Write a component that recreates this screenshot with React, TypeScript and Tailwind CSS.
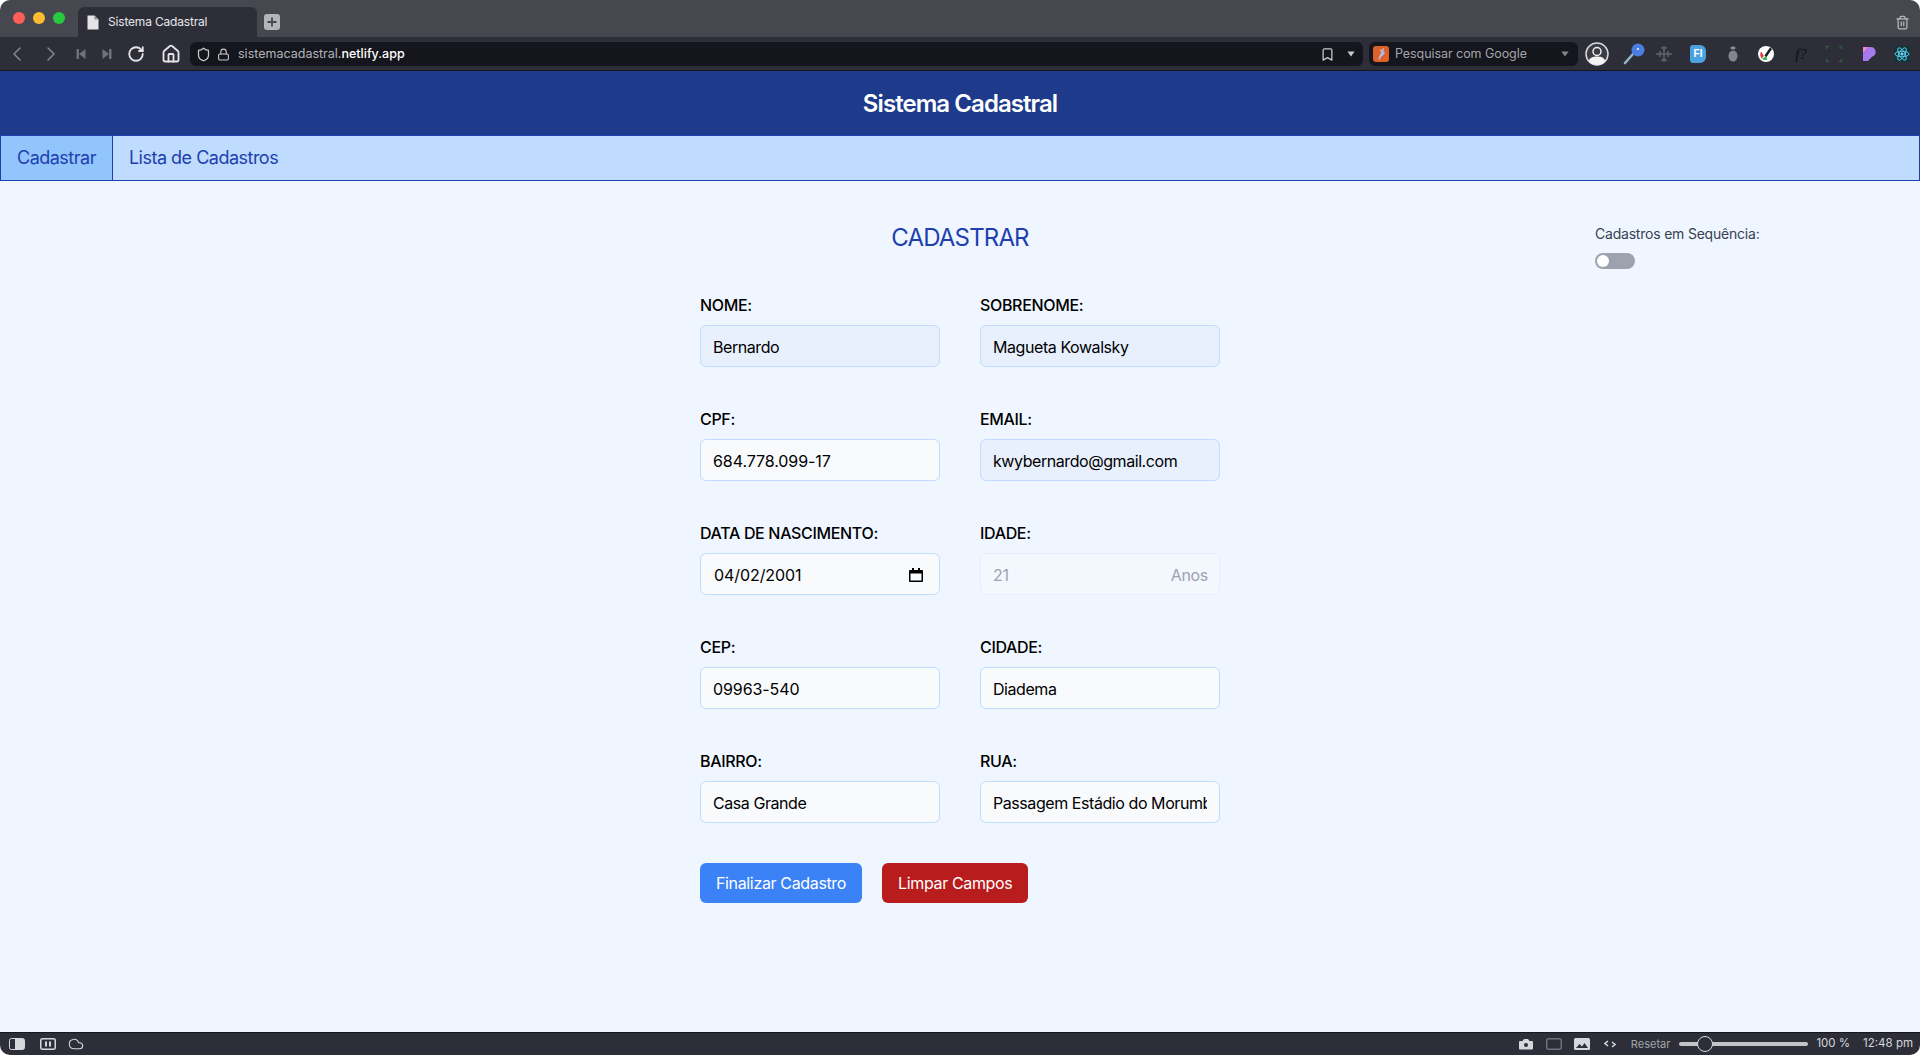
import { Bookmark, ChevronLeft, ChevronRight, Cloud, House, Lock, RotateCw, Shield, Trash2 } from "lucide-react";
import type { ReactNode } from "react";

const Slot = ({ className, children }: { className: string; children: ReactNode }) => (
  <div className={`flex shrink-0 items-center justify-center ${className}`}>{children}</div>
);

const Caret = ({ className }: { className: string }) => (
  <svg viewBox="0 0 10 7" className={className} fill="currentColor">
    <path d="M0.5 0.5h9L5 6.5z" />
  </svg>
);

const SkipIcon = ({ flip }: { flip?: boolean }) => (
  <svg viewBox="0 0 10 12" className={flip ? "h-3 w-[10px] rotate-180 text-[#6f7079]" : "h-3 w-[10px] text-[#6f7079]"} fill="currentColor">
    <rect x="0.5" y="1" width="2.5" height="10" />
    <path d="M9.5 1v10L3 6z" />
  </svg>
);

const Tabs = () => (
  <div className="flex h-[37px] items-end bg-[#46474f]">
    <div className="flex h-[37px] w-[78px] shrink-0 items-center gap-2 pb-0.5 pl-[13px]">
      <span className="h-3 w-3 rounded-full bg-[#ff5f57]" />
      <span className="h-3 w-3 rounded-full bg-[#febc2e]" />
      <span className="h-3 w-3 rounded-full bg-[#28c840]" />
    </div>
    <div className="flex h-[30px] w-[179px] items-center gap-[9px] rounded-t-md bg-[#2d2e38] pl-[9px]">
      <svg viewBox="0 0 12 15" className="h-[15px] w-3 shrink-0">
        <path d="M0.5 0.5h7L11.5 4.5v10H0.500z" fill="#e5e5e8" />
        <path d="M7.500 0.500v4h4" fill="#8b8c93" />
      </svg>
      <span className="font-['Inter'] text-xs tracking-[-0.015em] text-[#e6e6ea]">Sistema Cadastral</span>
    </div>
    <div className="mb-[7px] ml-[7px] flex h-4 w-4 items-center justify-center rounded-[3px] bg-[#b4b5ba]">
      <svg viewBox="0 0 10 10" className="h-[10px] w-[10px]">
        <path d="M5 0.500v9M0.500 5h9" stroke="#46474f" strokeWidth="1.800" />
      </svg>
    </div>
    <div className="flex-1" />
    <Trash2 className="mb-[6px] mr-[10px] h-[17px] w-[15px] text-[#b9bac0]" strokeWidth={2} />
  </div>
);

const Toolbar = () => (
  <div className="flex h-[34px] items-center border-b border-[#14151d] bg-[#2d2e38] pt-px">
    <Slot className="w-[34px]"><ChevronLeft className="h-6 w-6 text-[#85868d]" strokeWidth={1.500} /></Slot>
    <Slot className="w-[34px]"><ChevronRight className="h-6 w-6 text-[#85868d]" strokeWidth={1.500} /></Slot>
    <Slot className="w-[26px]"><SkipIcon /></Slot>
    <Slot className="w-[26px]"><SkipIcon flip /></Slot>
    <Slot className="w-[32px]"><RotateCw className="h-[18px] w-[18px] text-[#e4e4e8]" strokeWidth={2.400} /></Slot>
    <Slot className="w-[38px]"><House className="h-5 w-5 text-[#e4e4e8]" strokeWidth={2.200} /></Slot>
    <div className="flex h-6 flex-1 items-center rounded-md bg-[#14151d] pl-[6px] font-['Inter'] text-[12.500px]">
      <Shield className="h-[15px] w-[15px] text-[#c9cad0]" strokeWidth={2} />
      <Lock className="ml-[6px] h-[13px] w-[13px] text-[#c9cad0]" strokeWidth={2} />
      <span className="ml-2 text-[#b3b4ba]">sistemacadastral.</span>
      <span className="font-medium text-white">netlify.app</span>
      <div className="flex-1" />
      <Bookmark className="h-[15px] w-[15px] text-[#c9cad0]" strokeWidth={2} />
      <Caret className="ml-[12px] mr-2 h-[6px] w-2 text-[#c9cad0]" />
    </div>
    <div className="ml-[6px] flex h-6 w-[209px] shrink-0 items-center rounded-md bg-[#14151d] pl-1 font-['Inter'] text-[12.500px] tracking-[-0.005em] text-[#a3a4aa]">
      <svg viewBox="0 0 16 16" className="h-4 w-4 shrink-0">
        <rect width="16" height="16" rx="3" fill="#e0602a" />
        <path d="M10.500 2.500 6 13.500M7 4l4 3-5 5" stroke="#a9c4f0" strokeWidth="1.500" fill="none" />
      </svg>
      <span className="ml-[6px]">Pesquisar com Google</span>
      <div className="flex-1" />
      <Caret className="mr-[9px] h-[6px] w-2 text-[#85868d]" />
    </div>
    <Slot className="w-[38px]">
      <svg viewBox="0 0 24 24" className="h-6 w-6">
        <circle cx="12" cy="12" r="11" fill="#3a3b44" stroke="#d8d8dc" strokeWidth="1.500" />
        <circle cx="12" cy="9.500" r="4" fill="none" stroke="#f2f2f4" strokeWidth="1.500" />
        <path d="M3.500 19c2-4 5-4.500 8.500-4.500s6.500.5 8.500 4.500c-2 2.500-5 4-8.500 4s-6.500-1.500-8.500-4z" fill="#f2f2f4" />
      </svg>
    </Slot>
    <Slot className="w-[36px]">
      <svg viewBox="0 0 22 22" className="h-[22px] w-[22px]">
        <path d="M2 20 10 11" stroke="#8fb4c8" strokeWidth="2.600" strokeLinecap="round" />
        <circle cx="15" cy="7" r="6.500" fill="#4a7de2" />
        <circle cx="15" cy="6" r="1" fill="#ffffff" />
      </svg>
    </Slot>
    <Slot className="w-[24px]">
      <svg viewBox="0 0 18 18" className="h-[18px] w-[18px]" stroke="#62636b" strokeWidth="1.500" fill="none">
        <path d="M9 1v16M1 9h16M5 6v6M13 6v6M6 3h6M6 15h6" />
      </svg>
    </Slot>
    <Slot className="w-[44px]">
      <div className="flex h-[18px] w-4 items-center justify-center rounded-l-[3px] rounded-r-md bg-[#4aa3df] font-['Liberation_Sans',sans-serif] text-[10px] font-bold leading-none text-white">FI</div>
    </Slot>
    <Slot className="w-[26px]">
      <svg viewBox="0 0 10 16" className="h-4 w-[10px]">
        <rect x="2.500" y="0.500" width="5" height="3" rx="1.500" fill="#8a8b92" />
        <ellipse cx="5" cy="10" rx="4.500" ry="5.500" fill="#85868d" />
      </svg>
    </Slot>
    <Slot className="w-[40px]">
      <svg viewBox="0 0 16 16" className="h-4 w-4">
        <circle cx="8" cy="8" r="8" fill="#ffffff" />
        <path d="M3 5.500 6 10 3.500 12.500A7 7 0 0 1 3 5.500z" fill="#e23b3b" />
        <path d="M4 13l4-3 1.500 3.500A6 6 0 0 1 4 13z" fill="#31b44a" />
        <path d="M6.500 9.500 12 1.500l2 1.500-5.500 8z" fill="#1b1c22" />
      </svg>
    </Slot>
    <Slot className="w-[30px]">
      <span className="font-['Liberation_Serif',serif] text-[15px] italic text-[#0c0d12]">f?</span>
    </Slot>
    <Slot className="w-[36px]">
      <svg viewBox="0 0 16 16" className="h-4 w-4" stroke="#2f6b3a" strokeWidth="1.200" fill="none">
        <path d="M0.500 3V0.500H3M13 0.500h2.500V3M15.500 13v2.500H13M3 15.500H0.500V13" />
      </svg>
    </Slot>
    <Slot className="w-[32px]">
      <svg viewBox="0 0 16 16" className="h-4 w-4">
        <path d="M3 1h6L3 8z" fill="#e58ad0" />
        <path d="M9 1h1.500a5 5 0 0 1 1.500 9.800L8 15H3V8z" fill="#a77bf0" />
      </svg>
    </Slot>
    <Slot className="w-[36px]">
      <svg viewBox="-12 -12 24 24" className="h-4 w-4 bg-[#12343b]" stroke="#61dafb" strokeWidth="1.300" fill="none">
        <ellipse rx="10.500" ry="4.200" />
        <ellipse rx="10.500" ry="4.200" transform="rotate(60)" />
        <ellipse rx="10.500" ry="4.200" transform="rotate(120)" />
        <circle r="1.800" fill="#61dafb" />
      </svg>
    </Slot>
  </div>
);

const Label = ({ children }: { children: ReactNode }) => (
  <p className="mb-2 text-base font-medium tracking-[-0.021em] text-black">{children}</p>
);

const Field = ({ label, value, filled, spacing }: { label: string; value: string; filled?: boolean; spacing?: string }) => (
  <div>
    <Label>{label}</Label>
    <input
      readOnly
      value={value}
      className={`h-[42px] w-full rounded-md border border-[#bfdbfe] px-3 pt-px text-base text-black outline-none ${filled ? "bg-[#e8f0fe]" : "bg-[#f8fafc]"} ${spacing ?? "tracking-[-0.027em]"}`}
    />
  </div>
);

const StatusBar = () => (
  <div className="flex h-[23px] items-center border-t border-[#17181f] bg-[#2d2e38] font-['Inter'] text-[11.500px]">
    <svg viewBox="0 0 16 12" className="ml-[9px] h-3 w-4">
      <rect x="0.500" y="0.500" width="15" height="11" rx="2" fill="#2d2e38" stroke="#d6d7dc" />
      <path d="M6 0.500h7.500a2 2 0 0 1 2 2v7a2 2 0 0 1-2 2H6z" fill="#d6d7dc" />
    </svg>
    <svg viewBox="0 0 16 12" className="ml-[15px] h-3 w-4" fill="none">
      <rect x="0.750" y="0.750" width="14.500" height="10.500" rx="2" stroke="#d6d7dc" strokeWidth="1.500" />
      <path d="M6 3.500v5M10 3.500v5" stroke="#d6d7dc" strokeWidth="2" />
    </svg>
    <Cloud className="ml-3 h-4 w-4 text-[#d6d7dc]" strokeWidth={1.600} />
    <div className="flex-1" />
    <svg viewBox="0 0 16 12" className="h-3 w-4">
      <path d="M1 4a1 1 0 0 1 1-1h2.500l1.500-2h4l1.500 2H14a1 1 0 0 1 1 1v6.500a1 1 0 0 1-1 1H2a1 1 0 0 1-1-1z" fill="#d6d7dc" />
      <circle cx="8" cy="7" r="2" fill="#2d2e38" />
    </svg>
    <svg viewBox="0 0 16 12" className="ml-3 h-3 w-4" fill="none">
      <rect x="0.750" y="0.750" width="14.500" height="10.500" rx="2" stroke="#6f7079" strokeWidth="1.500" />
    </svg>
    <svg viewBox="0 0 16 12" className="ml-3 h-3 w-4">
      <rect width="16" height="12" rx="1.500" fill="#d6d7dc" />
      <path d="M2 10l3.500-4L8 8.500 10.500 5 14 10z" fill="#2d2e38" />
    </svg>
    <svg viewBox="0 0 12 8" className="ml-[14px] h-2 w-3" fill="none" stroke="#d6d7dc" strokeWidth="1.500">
      <path d="M4 1 1 3.500 4 6M8 2l3 2.500L8 7" />
    </svg>
    <span className="ml-[15px] text-[11px] text-[#a3a4aa]">Resetar</span>
    <div className="relative ml-[9px] h-1 w-[129px] rounded-full bg-[#c3c4ca]">
      <span className="absolute -top-[6px] left-[18px] h-4 w-4 rounded-full border border-[#d6d7dc] bg-[#2d2e38]" />
    </div>
    <span className="ml-2 text-[#d6d7dc]">100 %</span>
    <span className="ml-[13px] mr-[7px] text-[#d6d7dc]">12:48 pm</span>
  </div>
);

const App = () => {
  return (
    <div className="flex h-[1055px] flex-col overflow-hidden rounded-[10px] bg-[#eff6ff] font-['Inter',sans-serif]">
      <Tabs />
      <Toolbar />
      <header className="flex h-[64px] items-center justify-center bg-[#1e3a8a] pt-0.5">
        <h1 className="text-2xl font-semibold tracking-[-0.039em] text-white">Sistema Cadastral</h1>
      </header>
      <nav className="flex h-[46px] border border-[#1e40af] bg-[#bfdbfe] text-lg tracking-[-0.028em] text-[#1e40af]">
        <a className="flex items-center border-r border-[#1e40af] bg-[#93c5fd] px-4">Cadastrar</a>
        <a className="flex items-center px-4">Lista de Cadastros</a>
      </nav>
      <main className="grid flex-1 grid-cols-[1fr_520px_1fr]">
        <div />
        <div className="pt-[41px]">
          <h2 className="mb-[39px] text-center text-2xl tracking-[-0.035em] text-[#1e40af]">CADASTRAR</h2>
          <div className="grid grid-cols-2 gap-x-10 gap-y-10">
            <Field label="NOME:" value="Bernardo" filled />
            <Field label="SOBRENOME:" value="Magueta Kowalsky" filled />
            <Field label="CPF:" value="684.778.099-17" spacing="tracking-[-0.005em]" />
            <Field label="EMAIL:" value="kwybernardo@gmail.com" filled />
            <div>
              <Label>DATA DE NASCIMENTO:</Label>
              <div className="flex h-[42px] items-center justify-between rounded-md border border-[#bfdbfe] bg-[#f8fafc] pl-[13px] pr-[16px] pt-px text-base tracking-[-0.005em] text-black">
                04/02/2001
                <svg viewBox="0 0 14 14" className="h-[14px] w-[14px]">
                  <path d="M3 0h2v2h4V0h2v2h2a1 1 0 0 1 1 1v10a1 1 0 0 1-1 1H1a1 1 0 0 1-1-1V3a1 1 0 0 1 1-1h2zM1.500 5.500v7h11v-7z" fill="#000000" />
                </svg>
              </div>
            </div>
            <div>
              <Label>IDADE:</Label>
              <div className="flex h-[42px] items-center justify-between rounded-md border border-[#e4eefc] bg-[#f3f7fe] pl-3 pr-[11px] pt-px text-base tracking-[-0.02em] text-[#9ca3af]">
                <span>21</span>
                <span>Anos</span>
              </div>
            </div>
            <Field label="CEP:" value="09963-540" spacing="tracking-[-0.005em]" />
            <Field label="CIDADE:" value="Diadema" />
            <Field label="BAIRRO:" value="Casa Grande" />
            <Field label="RUA:" value="Passagem Estádio do Morumbi" />
          </div>
          <div className="mt-10 flex gap-5">
            <button className="rounded-md bg-[#3b82f6] px-4 py-2 text-base tracking-[-0.022em] text-white">Finalizar Cadastro</button>
            <button className="rounded-md bg-[#b91c1c] px-4 py-2 text-base tracking-[-0.022em] text-white">Limpar Campos</button>
          </div>
        </div>
        <aside className="pl-[375px] pt-[43px]">
          <p className="whitespace-nowrap text-sm tracking-[-0.015em] text-[#374151]">Cadastros em Sequência:</p>
          <div className="mt-[9px] flex h-4 w-10 items-center rounded-full bg-[#9ca3af] pl-0.5">
            <span className="h-3 w-3 rounded-full bg-white" />
          </div>
        </aside>
      </main>
      <StatusBar />
    </div>
  );
};

export default App;
